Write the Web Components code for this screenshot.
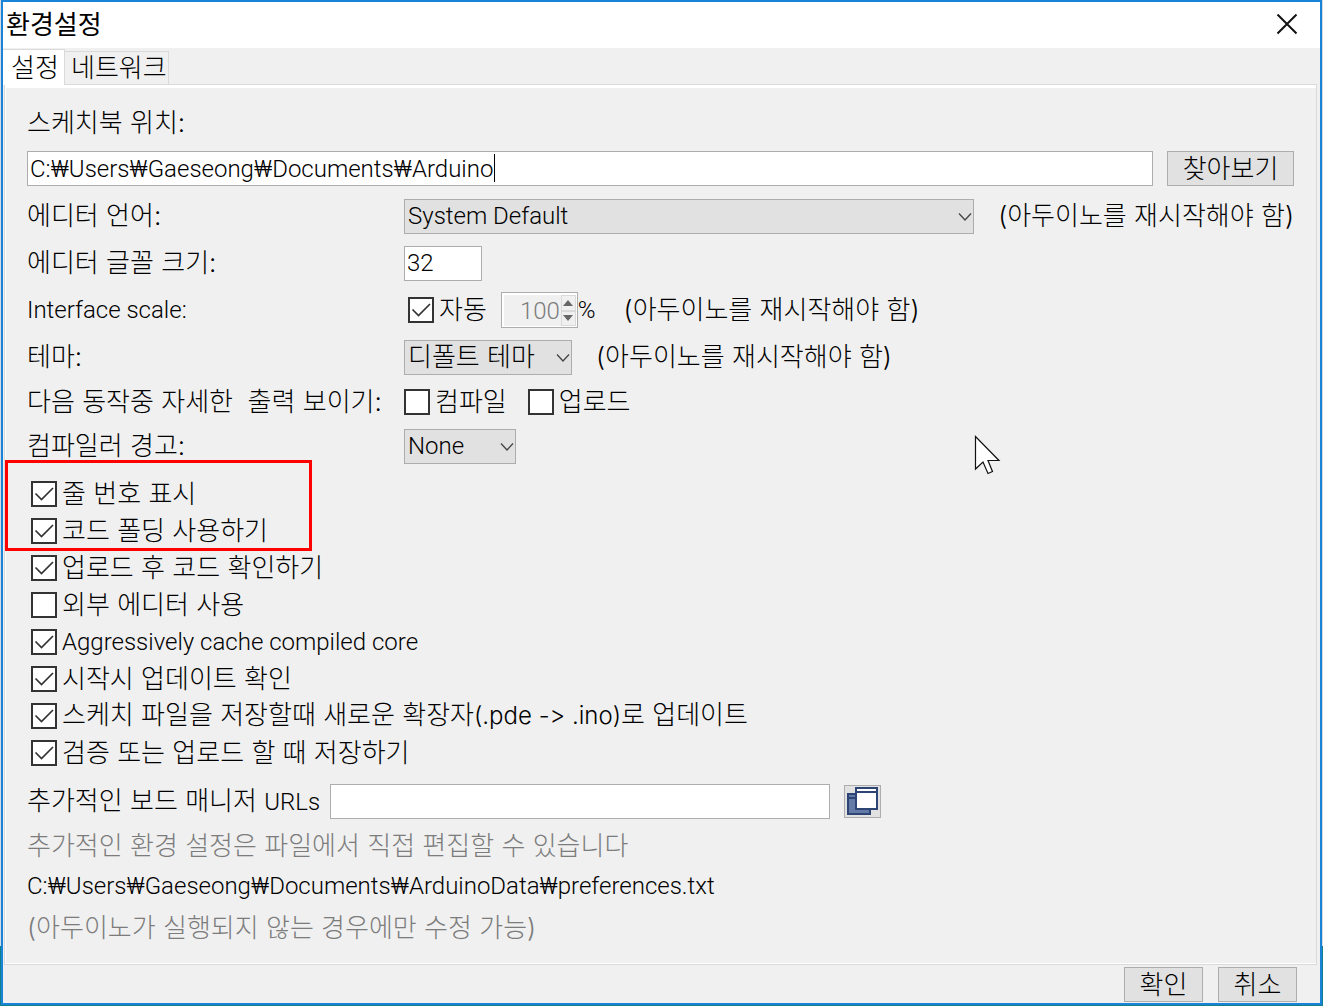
<!DOCTYPE html>
<html lang="ko">
<head>
<meta charset="utf-8">
<title>환경설정</title>
<style>
  :root {
    --face: #f0f0f0;
    --button: #e1e1e1;
    --edge: #adadad;
    --line: #dadada;
    --accent: #1883d7;
    --muted: #7c7c7c;
    --en: 24px;
  }
  body {
    margin: 0;
    padding: 0 1px 1px;
    box-sizing: border-box;
    min-height: 100vh;
    display: flex;
    background: linear-gradient(#d5dbe0 0 94%, #12808c 94%);
    font: 300 26px/32px Inter, "Noto Sans CJK KR", sans-serif;
    font-variant-ligatures: none;
    color: #000;
  }
  .ext { font-size: var(--en); }
</style>
</head>
<body>
<pref-window heading="환경설정">
  <pref-tabs slot="tabs"></pref-tabs>
  <pref-path label="스케치북 위치:" value="C:₩Users₩Gaeseong₩Documents₩Arduino"><pref-button>찾아보기</pref-button></pref-path>
  <pref-choice label="에디터 언어:" value="System Default" wide latin><pref-note>(아두이노를 재시작해야 함)</pref-note></pref-choice>
  <pref-size label="에디터 글꼴 크기:" value="32"></pref-size>
  <pref-group label="Interface scale:" latin>
    <pref-check checked inset>자동</pref-check>
    <pref-spinner value="100"></pref-spinner>
    <pref-note>(아두이노를 재시작해야 함)</pref-note>
  </pref-group>
  <pref-choice label="테마:" value="디폴트 테마"><pref-note>(아두이노를 재시작해야 함)</pref-note></pref-choice>
  <pref-group label="다음 동작중 자세한  출력 보이기:" short>
    <pref-check>컴파일</pref-check>
    <pref-check>업로드</pref-check>
  </pref-group>
  <pref-choice label="컴파일러 경고:" value="None" latin small></pref-choice>
  <pref-list>
    <pref-highlight>
      <pref-check checked inset>줄 번호 표시</pref-check>
      <pref-check checked inset>코드 폴딩 사용하기</pref-check>
    </pref-highlight>
    <pref-check checked inset>업로드 후 코드 확인하기</pref-check>
    <pref-check inset>외부 에디터 사용</pref-check>
    <pref-check checked inset latin>Aggressively cache compiled core</pref-check>
    <pref-check checked inset>시작시 업데이트 확인</pref-check>
    <pref-check checked inset>스케치 파일을 저장할때 새로운 확장자<span class="ext">(.pde -&gt; .ino)</span>로 업데이트</pref-check>
    <pref-check checked inset>검증 또는 업로드 할 때 저장하기</pref-check>
  </pref-list>
  <pref-urls></pref-urls>
  <pref-info></pref-info>
  <pref-button slot="actions" compact>확인</pref-button>
  <pref-button slot="actions" compact>취소</pref-button>
</pref-window>
<mouse-pointer></mouse-pointer>

<script>
const base = `
  * { box-sizing: border-box; }
  input, select, button { font: inherit; color: inherit; margin: 0; border-radius: 0; outline: 0; }
  input { border: 1px solid var(--edge); background: #fff; padding: 0 2px; height: 35px; min-width: 0; }
  .latin { font-family: Roboto, "Noto Sans CJK KR", sans-serif; font-size: var(--en); }
`;
function define(name, css, markup) {
  customElements.define(name, class extends HTMLElement {
    constructor() {
      super();
      const get = (key) => this.getAttribute(key) || '';
      this.attachShadow({ mode: 'open' }).innerHTML =
        `<style>${base}${css}</style>` + markup(get, (key) => this.hasAttribute(key));
    }
  });
}

define('pref-window', `
  :host { flex: 1; display: flex; flex-direction: column; border: 2px solid var(--accent); background: var(--face); min-width: 0; }
  header { display: flex; align-items: center; justify-content: space-between; height: 46px; background: #fff; padding: 0 22px 0 3px; }
  h1 { margin: 0; font: inherit; font-weight: 400; }
  .close { border: 0; background: none; padding: 0; display: flex; }
  main { flex: 1; display: flex; flex-direction: column; margin: 0 3px 0 1px; padding: 20px 22px 0 22px;
    border: 1px solid var(--line); border-top: 0; box-shadow: inset 0 3px #fff, inset 1px 0 #fff, inset 0 -1px #fff; }
  footer { display: flex; justify-content: flex-end; gap: 15px; padding: 2px 23px 1px; }
`, (get) => `
  <header><h1>${get('heading')}</h1>
    <button class="close" aria-label="닫기"><svg width="22" height="22" viewBox="0 0 22 22"><path d="M1.5 .5 20.5 19.5M20.5 .5 1.5 19.5" stroke="#111" stroke-width="2" fill="none"/></svg></button>
  </header>
  <slot name="tabs"></slot>
  <main><slot></slot></main>
  <footer><slot name="actions"></slot></footer>`);

define('pref-tabs', `
  :host { display: flex; align-items: flex-end; height: 37px; margin: 0 3px 0 0; border-bottom: 1px solid var(--line); box-sizing: border-box; }
  button { border: 1px solid var(--line); border-left: 0; border-bottom: 0; background: var(--face); padding: 0 0 0 6px; height: 33px; width: 104px; line-height: 32px; text-align: left; white-space: nowrap; }
  .on { background: #fff; height: 36px; width: 62px; padding: 0 0 0 8px; margin-bottom: -1px; }
`, () => `<button class="on" role="tab" aria-selected="true">설정</button><button role="tab" aria-selected="false">네트워크</button>`);

define('pref-button', `
  :host { display: block; }
  button { width: 127px; height: 35px; padding: 0; line-height: 32px; background: var(--button); border: 1px solid var(--edge); }
  :host([compact]) button { width: 79px; }
`, () => `<button><slot></slot></button>`);

define('pref-note', `:host { display: block; white-space: nowrap; }`, () => `<slot></slot>`);

define('pref-path', `
  :host { display: block; margin-bottom: 11px; }
  label { display: block; height: 36px; line-height: 36px; margin-bottom: 10px; }
  .line { display: flex; gap: 14px; height: 36px; }
  .box { flex: 1; position: relative; display: flex; }
  input { flex: 1; }
  .caret { position: absolute; left: 467px; top: 3px; width: 1px; height: 28px; background: #000; }
`, (get) => `<label for="path">${get('label')}</label>
  <div class="line"><div class="box"><input id="path" class="latin" value="${get('value')}"><i class="caret"></i></div><slot></slot></div>`);

const row = `
  :host { display: grid; grid-template-columns: 377px 1fr; grid-template-rows: 100%; align-items: center; height: 36px; margin-bottom: 11px; }
  .label { white-space: pre; }
  .line { display: flex; align-items: center; min-width: 0; }
`;
define('pref-choice', row + `
  .line { gap: 24px; }
  .box { position: relative; display: flex; width: 168px; }
  :host([wide]) .box { flex: 1; }
  :host([small]) .box { width: 112px; }
  select { appearance: none; flex: 1; min-width: 0; height: 35px; padding: 0 3px; background: var(--button); border: 1px solid var(--edge); }
  svg { position: absolute; right: 2px; top: 12px; pointer-events: none; }
`, (get, has) => `<label class="label" for="choice">${get('label')}</label>
  <div class="line"><div class="box"><select id="choice" class="${has('latin') ? 'latin' : ''}"><option>${get('value')}</option></select>
  <svg width="14" height="12" viewBox="0 0 14 12"><path d="M1 2.5 7 9 13 2.5" fill="none" stroke="#444" stroke-width="1.3"/></svg></div><slot></slot></div>`);

define('pref-size', row + `input { width: 78px; }`,
  (get) => `<label class="label" for="size">${get('label')}</label><div class="line"><input id="size" class="latin" value="${get('value')}"></div>`);

define('pref-group', row + `
  :host([short]) { height: 31px; }
  :host([short]) .line { gap: 21px; height: 28px; }
  .line { gap: 14px; }
  ::slotted(pref-note) { margin-left: 14px; }
`, (get, has) => `<span class="label ${has('latin') ? 'latin' : ''}" id="name">${get('label')}</span><div class="line" role="group" aria-labelledby="name"><slot></slot></div>`);

define('pref-check', `
  :host { display: block; }
  :host([inset]) { padding-left: 4px; }
  label { display: flex; align-items: center; gap: 5px; height: 37px; white-space: nowrap; }
  .box { display: grid; }
  .box > * { grid-area: 1 / 1; }
  input { appearance: none; width: 26px; height: 26px; border: 2px solid #333; padding: 0; }
  svg { display: none; pointer-events: none; }
  input:checked + svg { display: block; }
`, (get, has) => `<label><span class="box"><input type="checkbox" ${has('checked') ? 'checked' : ''}><svg width="26" height="26" viewBox="0 0 26 26"><path d="M4.5 12.5 10.5 18.5 22 7" fill="none" stroke="#333" stroke-width="1.7"/></svg></span><span class="${has('latin') ? 'latin' : ''}"><slot></slot></span></label>`);

define('pref-spinner', `
  :host { display: block; }
  label { display: flex; align-items: center; }
  .box { display: flex; width: 77px; height: 36px; border: 1px solid var(--edge); background: #fff; padding: 2px 1px 1px 2px; }
  input { appearance: textfield; flex: 1; height: 31px; border: 0; padding: 0 1px 0 0; background: var(--face); color: var(--muted); text-align: right; }
  input::-webkit-inner-spin-button { appearance: none; margin: 0; }
  .steps { display: flex; flex-direction: column; width: 15px; }
  button { flex: 1; display: flex; align-items: center; justify-content: center; padding: 0; border: 1px solid var(--line); background: var(--face); }
`, (get) => `<label><span class="box"><input type="number" class="latin" value="${get('value')}" disabled><span class="steps">
  <button disabled aria-label="증가"><svg width="10" height="6"><path d="M0 6 5 0 10 6z" fill="#666"/></svg></button>
  <button disabled aria-label="감소"><svg width="10" height="6"><path d="M0 0 5 6 10 0z" fill="#666"/></svg></button></span></span><span class="latin">%</span></label>`);

define('pref-list', `:host { display: block; margin-bottom: 12px; }`, () => `<slot></slot>`);

define('pref-highlight', `
  :host { display: block; position: relative; }
  .mark { position: absolute; left: -22px; top: -15px; width: 307px; height: 91px; border: 3px solid #f00; pointer-events: none; }
`, () => `<slot></slot><div class="mark"></div>`);

define('pref-urls', `
  :host { display: flex; align-items: center; height: 36px; }
  label { white-space: nowrap; width: 303px; }
  input { width: 500px; }
  button { display: flex; width: 37px; height: 33px; margin-left: 14px; padding: 1px; background: var(--button); border: 1px solid var(--edge); }
`, () => `<label for="urls">추가적인 보드 매니저 <span class="latin">URLs</span></label><input id="urls" class="latin">
  <button aria-label="목록 편집"><svg width="33" height="29" viewBox="0 0 33 29">
    <rect x="2" y="7" width="22" height="20" fill="#647ba7" stroke="#2c4574" stroke-width="2"/>
    <path d="M2 11H10" stroke="#2c4574" stroke-width="2"/>
    <rect x="10" y="1" width="21" height="21" fill="#fff" stroke="#2c4574" stroke-width="2"/>
    <path d="M10 5H31" stroke="#2c4574" stroke-width="2"/></svg></button>`);

define('pref-info', `
  :host { display: block; margin-top: 6px; }
  p { margin: 0; line-height: 41px; height: 41px; white-space: nowrap; }
  .dim { color: var(--muted); }
`, () => `<p class="dim">추가적인 환경 설정은 파일에서 직접 편집할 수 있습니다</p>
  <p class="latin">C:₩Users₩Gaeseong₩Documents₩ArduinoData₩preferences.txt</p>
  <p class="dim">(아두이노가 실행되지 않는 경우에만 수정 가능)</p>`);

define('mouse-pointer', `:host { position: absolute; left: 974px; top: 435px; pointer-events: none; } svg { display: block; }`,
  () => `<svg width="28" height="42" viewBox="0 0 28 42"><path d="M1.5 1.5V34L9 27 14 38.5 18.5 36.5 14 25.5H25z" fill="#fff" stroke="#111" stroke-width="1.2"/></svg>`);
</script>
</body>
</html>
